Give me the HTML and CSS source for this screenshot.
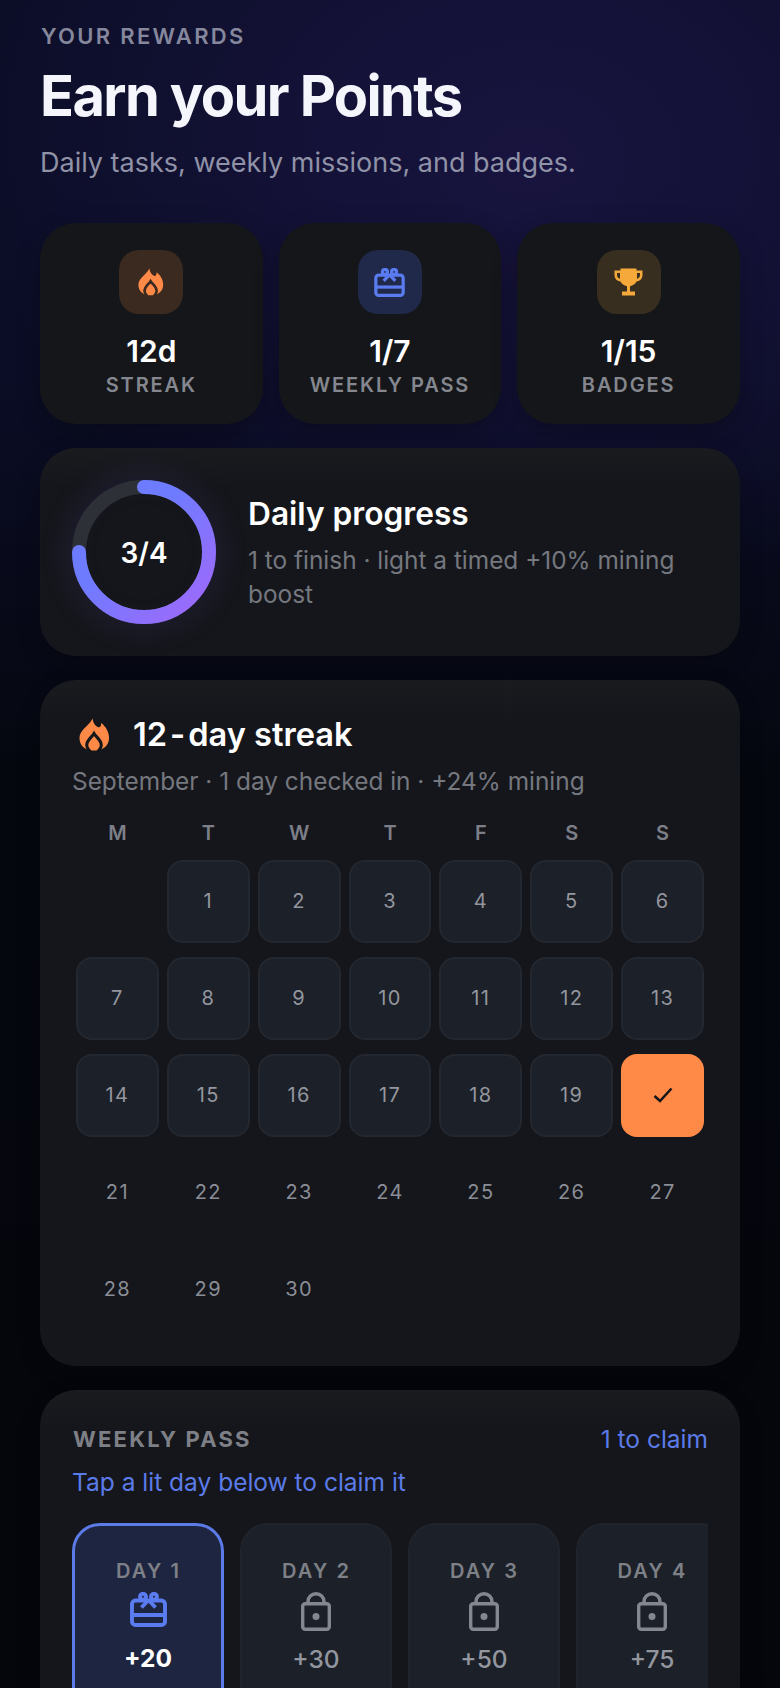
FILE: index.html
```html
<!DOCTYPE html>
<html lang="en">
<head>
<meta charset="utf-8">
<title>Earn your Points</title>
<link rel="stylesheet" href="styles.css">
</head>
<body>
<main class="page">
  <header class="hero">
    <div class="eyebrow">YOUR REWARDS</div>
    <h1 class="title">Earn your Points</h1>
    <p class="lede">Daily tasks, weekly missions, and badges.</p>
  </header>

  <section class="stats">
    <div class="stat">
      <div class="tile tile-orange">
        <svg class="ic-flame" viewBox="0 0 32 34"><path class="flame-fill" d="M14 0.5C14.5 5 17 8.5 20 9.5 21.8 10 22.8 8 23 5 27.500 8.500 31 14 31 20.500 31 28.500 24.500 33.500 15.500 33.500 6.500 33.500 0.500 28.500 0.500 20.500 0.500 12.500 9.500 9 14 0.500Z"/><path class="flame-cut cut-tile" d="M15.500 16C18 20 23 22.500 23 28 23 31 21 33 19 35L12 35C10 33 8 31 8 28 8 22.500 13 20 15.500 16Z"/></svg>
      </div>
      <div class="stat-value">12d</div>
      <div class="stat-label">STREAK</div>
    </div>
    <div class="stat">
      <div class="tile tile-blue">
        <svg class="ic-gift" viewBox="0 0 37 35"><g class="gift-lines"><rect x="2" y="8.500" width="33" height="24.500" rx="3.500"/><path d="M2 23H35"/><circle cx="13" cy="4.800" r="3"/><circle cx="24" cy="4.800" r="3"/><path d="M18.500 8L11.500 15.500M18.500 8L25.500 15.500"/></g></svg>
      </div>
      <div class="stat-value">1/7</div>
      <div class="stat-label">WEEKLY PASS</div>
    </div>
    <div class="stat">
      <div class="tile tile-gold">
        <svg class="ic-trophy" viewBox="0 0 29 28"><path class="trophy-fill" d="M6.500 0.500H22.500V2.500H28.500V7C28.500 10.500 26 13 22.500 13.500 21.300 16 19 17.700 16 18.200V23.500H21V27.500H8V23.500H13V18.200C10 17.700 7.700 16 6.500 13.500 3 13 0.500 10.500 0.500 7V2.500H6.500ZM3 5V7C3 8.800 4.200 10.300 6 10.800V5ZM23 5V10.800C24.800 10.300 26 8.800 26 7V5Z" fill-rule="evenodd"/></svg>
      </div>
      <div class="stat-value">1/15</div>
      <div class="stat-label">BADGES</div>
    </div>
  </section>

  <section class="card progress">
    <div class="ring">
      <svg class="ring-svg" viewBox="0 0 144 144">
        <defs>
          <linearGradient id="ringGrad" x1="1" y1="0" x2="0" y2="1">
            <stop offset="0" stop-color="#6a7dff"/>
            <stop offset="0.4" stop-color="#6f7bff"/>
            <stop offset="1" stop-color="#a268fb"/>
          </linearGradient>
        </defs>
        <circle class="ring-track" cx="72" cy="72" r="65"/>
        <circle class="ring-bar" cx="72" cy="72" r="65" pathLength="100"/>
      </svg>
      <span class="ring-text">3/4</span>
    </div>
    <div class="progress-copy">
      <h2 class="progress-title">Daily progress</h2>
      <p class="progress-sub">1 to finish · light a timed +10% mining boost</p>
    </div>
  </section>

  <section class="card streak">
    <div class="streak-head">
      <svg class="ic-flame-lg" viewBox="0 0 32 34"><path class="flame-fill" d="M14 0.500C14.500 5 17 8.500 20 9.500 21.800 10 22.800 8 23 5 27.500 8.500 31 14 31 20.500 31 28.500 24.500 33.500 15.500 33.500 6.500 33.500 0.500 28.500 0.500 20.500 0.500 12.500 9.500 9 14 0.500Z"/><path class="flame-cut cut-card" d="M15.500 16C18 20 23 22.500 23 28 23 31 21 33 19 35L12 35C10 33 8 31 8 28 8 22.500 13 20 15.500 16Z"/></svg>
      <h2 class="streak-title">12<span class="hy">-</span>day streak</h2>
    </div>
    <p class="streak-sub">September · 1 day checked in · +24% mining</p>
    <div class="cal">
      <div class="dow">M</div><div class="dow">T</div><div class="dow">W</div><div class="dow">T</div><div class="dow">F</div><div class="dow">S</div><div class="dow">S</div>
      <div class="day"></div>
      <div class="day lit">1</div><div class="day lit">2</div><div class="day lit">3</div><div class="day lit">4</div><div class="day lit">5</div><div class="day lit">6</div>
      <div class="day lit">7</div><div class="day lit">8</div><div class="day lit">9</div><div class="day lit">10</div><div class="day lit">11</div><div class="day lit">12</div><div class="day lit">13</div>
      <div class="day lit">14</div><div class="day lit">15</div><div class="day lit">16</div><div class="day lit">17</div><div class="day lit">18</div><div class="day lit">19</div>
      <div class="day today"><svg class="ic-check" viewBox="0 0 20 16"><path d="M1.500 9L7 14 18.500 1.500"/></svg></div>
      <div class="day">21</div><div class="day">22</div><div class="day">23</div><div class="day">24</div><div class="day">25</div><div class="day">26</div><div class="day">27</div>
      <div class="day">28</div><div class="day">29</div><div class="day">30</div><div class="day"></div><div class="day"></div><div class="day"></div><div class="day"></div>
    </div>
  </section>

  <section class="card weekly">
    <div class="weekly-head">
      <span class="weekly-title">WEEKLY PASS</span>
      <span class="weekly-count">1 to claim</span>
    </div>
    <p class="weekly-hint">Tap a lit day below to claim it</p>
    <div class="pass">
      <div class="pass-day active">
        <div class="pass-label">DAY 1</div>
        <svg class="ic-gift-lg" viewBox="0 0 37 35"><g class="gift-lines"><rect x="2" y="8.500" width="33" height="24.500" rx="3.500"/><path d="M2 23H35"/><circle cx="13" cy="4.800" r="3"/><circle cx="24" cy="4.800" r="3"/><path d="M18.500 8L11.500 15.500M18.500 8L25.500 15.500"/></g></svg>
        <div class="pass-value">+20</div>
      </div>
      <div class="pass-day">
        <div class="pass-label">DAY 2</div>
        <svg class="ic-lock" viewBox="0 0 30 39"><rect class="lock-line" x="1.700" y="11.700" width="26.600" height="25.600" rx="2.500"/><path class="lock-line" d="M7 11V9.500C7 5 10.500 1.700 15 1.700S23 5 23 9.500V11"/><circle class="lock-dot" cx="15" cy="24.500" r="3.500"/></svg>
        <div class="pass-value">+30</div>
      </div>
      <div class="pass-day">
        <div class="pass-label">DAY 3</div>
        <svg class="ic-lock" viewBox="0 0 30 39"><rect class="lock-line" x="1.700" y="11.700" width="26.600" height="25.600" rx="2.500"/><path class="lock-line" d="M7 11V9.500C7 5 10.500 1.700 15 1.700S23 5 23 9.500V11"/><circle class="lock-dot" cx="15" cy="24.500" r="3.500"/></svg>
        <div class="pass-value">+50</div>
      </div>
      <div class="pass-day">
        <div class="pass-label">DAY 4</div>
        <svg class="ic-lock" viewBox="0 0 30 39"><rect class="lock-line" x="1.700" y="11.700" width="26.600" height="25.600" rx="2.500"/><path class="lock-line" d="M7 11V9.500C7 5 10.500 1.700 15 1.700S23 5 23 9.500V11"/><circle class="lock-dot" cx="15" cy="24.500" r="3.500"/></svg>
        <div class="pass-value">+75</div>
      </div>
    </div>
  </section>
</main>
</body>
</html>
```

FILE: styles.css
```css
* { box-sizing: border-box; }
html, body { margin: 0; padding: 0; height: 1688px; overflow: hidden; }
body {
  background:
    radial-gradient(ellipse 560px 440px at 68% 160px, #18143f 0%, rgba(22, 19, 60, 0.7) 45%, rgba(12, 12, 40, 0) 100%),
    linear-gradient(180deg, #0c0e28 0%, #0b0d26 22%, #05070f 46%, #05060b 100%);
  color: #fff;
  font-family: Inter, "Liberation Sans", sans-serif;
}
.page { padding: 22px 40px 0; display: flex; flex-direction: column; }

.hero { display: flex; flex-direction: column; }
.eyebrow { font-size: 22px; line-height: 28px; font-weight: 600; letter-spacing: 2.300px; color: #85879c; padding-left: 1px; }
.title { margin: 12px 0 0; font-size: 56px; line-height: 68px; font-weight: 700; letter-spacing: -1.620px; color: #f5f6fb; }
.lede { margin: 16px 0 0; font-size: 27px; line-height: 34px; color: #9092a7; }

.stats { margin-top: 43px; display: grid; grid-template-columns: repeat(3, 1fr); gap: 16px; }
.stat { height: 201px; background: #14161a; border-radius: 36px; padding-top: 27px; display: flex; flex-direction: column; align-items: center; box-shadow: 0 8px 24px rgba(0, 0, 0, 0.25); }
.tile { width: 64px; height: 64px; border-radius: 20px; display: flex; align-items: center; justify-content: center; }
.tile-orange { background: #3a2a20; }
.tile-blue { background: #20294a; }
.tile-gold { background: #372e20; }
.stat-value { margin-top: 19px; font-size: 30px; line-height: 36px; font-weight: 600; color: #fff; }
.stat-label { margin-top: 2px; font-size: 20px; line-height: 28px; font-weight: 600; letter-spacing: 1.900px; color: #85878f; }

.ic-flame { width: 26px; height: 28px; }
.ic-flame-lg { width: 31px; height: 33px; flex: none; }
.flame-fill { fill: #ff8a47; }
.flame-cut { fill: #ff8a47; stroke-width: 3.200; }
.cut-tile { stroke: #3a2a20; }
.cut-card { stroke: #15171b; }
.ic-gift { width: 31px; height: 29px; }
.ic-gift-lg { width: 37px; height: 35px; }
.gift-lines { fill: none; stroke: #5b7cf0; stroke-width: 3.900; stroke-linejoin: round; }
.ic-trophy { width: 29px; height: 28px; }
.trophy-fill { fill: #f5a93a; }

.card { background: linear-gradient(180deg, #191b1f 0, #15161b 40px); border-radius: 36px; margin-top: 24px; box-shadow: 0 8px 24px rgba(0, 0, 0, 0.2); }

.progress { height: 208px; padding: 32px; display: flex; align-items: center; gap: 32px; }
.ring { position: relative; width: 144px; height: 144px; flex: none; border-radius: 50%; display: flex; align-items: center; justify-content: center; box-shadow: 0 0 36px rgba(124, 96, 255, 0.14), inset 0 0 32px rgba(124, 96, 255, 0.06); }
.ring-svg { position: absolute; inset: 0; width: 144px; height: 144px; transform: rotate(-90deg); }
.ring-track { fill: none; stroke: #2e3038; stroke-width: 14; }
.ring-bar { fill: none; stroke: url(#ringGrad); stroke-width: 14; stroke-linecap: round; stroke-dasharray: 75 100; }
.ring-text { position: relative; top: 1px; font-size: 28px; font-weight: 600; color: #fff; }
.progress-copy { flex: 1; min-width: 0; padding-top: 1px; }
.progress-title { margin: 0; font-size: 31.700px; line-height: 40px; font-weight: 600; color: #fff; }
.progress-sub { margin: 9px 0 0; font-size: 24.400px; line-height: 34px; color: #75787f; }

.streak { height: 686px; padding: 34px 32px 0; }
.streak-head { display: flex; align-items: center; gap: 23px; padding-left: 7px; height: 40px; }
.streak-title { margin: 0; font-size: 32.600px; line-height: 40px; font-weight: 600; color: #fff; }
.hy { padding: 0 3px; }
.streak-sub { margin: 10px 0 0; font-size: 24.400px; line-height: 34px; color: #75787f; }
.cal { margin-top: 22px; padding: 0 4px; display: grid; grid-template-columns: repeat(7, 1fr); column-gap: 8px; row-gap: 14px; }
.dow { height: 26px; margin-bottom: 0; display: flex; align-items: center; justify-content: center; font-size: 20px; font-weight: 600; color: #7c7f88; }
.day { aspect-ratio: 1; border-radius: 16px; display: flex; align-items: center; justify-content: center; font-size: 20px; color: #8a8d95; letter-spacing: 1.400px; }
.lit { background: #1c2028; border: 2px solid #23272f; color: #93969e; }
.today { background: #ff8a47; }
.ic-check { width: 20px; height: 16px; fill: none; stroke: #14161a; stroke-width: 2.500; }

.weekly { padding: 33px 32px 0; height: 420px; }
.weekly-head { display: flex; align-items: center; justify-content: space-between; height: 32px; }
.weekly-title { font-size: 22px; font-weight: 700; letter-spacing: 2.200px; color: #7e8087; padding-left: 1px; }
.weekly-count { font-size: 24.500px; color: #5b7be8; }
.weekly-hint { margin: 11px 0 0; font-size: 24.500px; line-height: 32px; color: #5b7be8; }
.pass { margin-top: 25px; display: flex; gap: 16px; overflow: hidden; }
.pass-day { flex: none; width: 152px; height: 230px; border-radius: 28px; background: #1c2028; border: 2px solid #20242c; padding-top: 32px; display: flex; flex-direction: column; align-items: center; }
.pass-day.active { background: #1e2540; border: 3px solid #5b7be8; padding-top: 31px; }
.pass-label { font-size: 20px; line-height: 28px; font-weight: 600; letter-spacing: 2.100px; color: #7e8087; padding-left: 1px; }
.pass-value { margin-top: 8px; font-size: 24.500px; line-height: 40px; font-weight: 500; color: #93969e; }
.active .pass-value { font-weight: 700; color: #fff; margin-top: 11px; }
.ic-gift-lg { margin-top: 7px; }
.ic-lock { width: 30px; height: 39px; margin-top: 7px; }
.lock-line { fill: none; stroke: #85878f; stroke-width: 3.400; }
.lock-dot { fill: #85878f; }
```
